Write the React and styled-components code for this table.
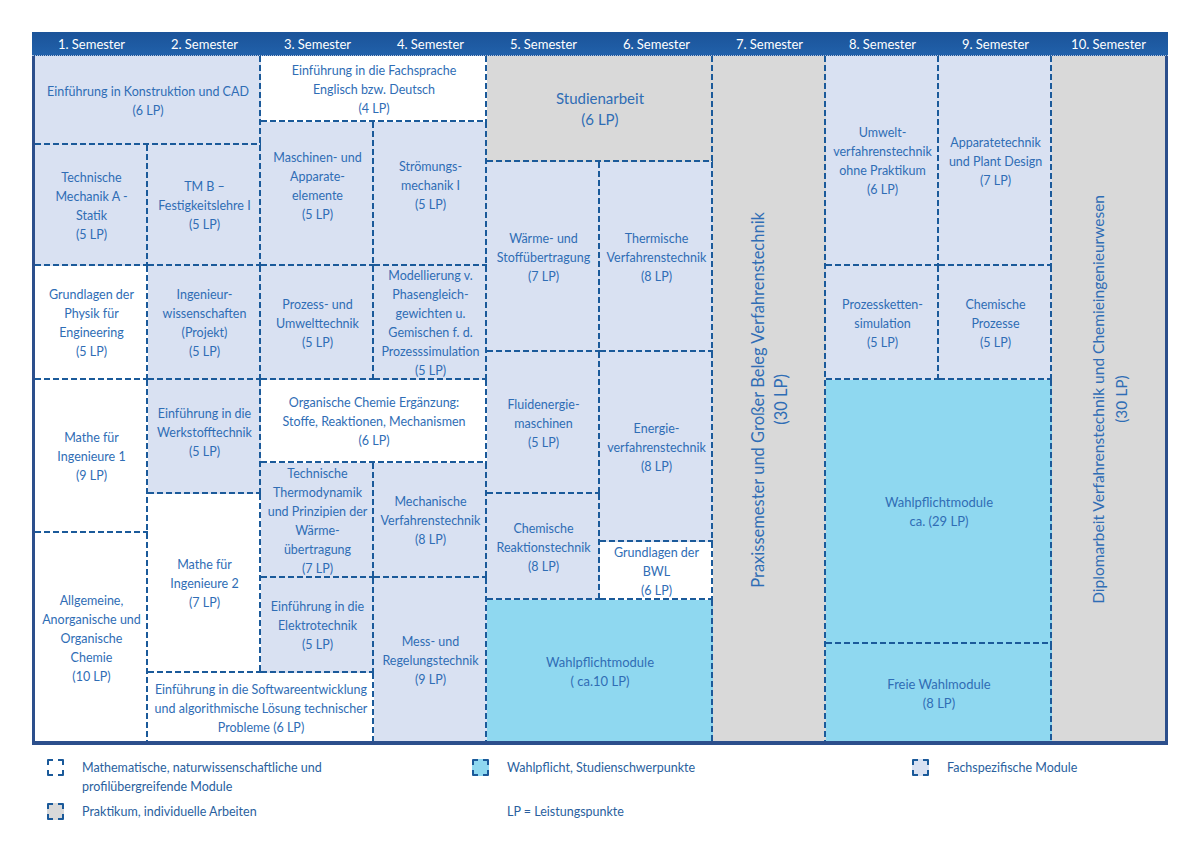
import React from 'react';
import styled, { createGlobalStyle } from 'styled-components';

const GlobalStyle = createGlobalStyle`
  body {
    margin: 0;
    background: #ffffff;
    font-family: Lato, "Noto Sans", sans-serif;
  }
`;

const fills = {
  blue: '#d9e1f2',
  white: '#ffffff',
  gray: '#d9d9d9',
  cyan: '#8fd8f0',
};

const DASH = '#1b5a9a';

const Page = styled.div`
  padding: 32px 0 0 32px;
`;

const Frame = styled.div`
  width: 1130px;
  border-left: 3px solid #2c4f8c;
  border-right: 3px solid #2c4f8c;
  border-bottom: 4px solid #2c4f8c;
`;

const Header = styled.div`
  display: grid;
  grid-template-columns: repeat(10, 113px);
  height: 23px;
  margin-left: -3px;
  margin-right: -3px;
  padding: 0 3px;
  background: linear-gradient(#1b5399, #2161aa);
  border-bottom: 1px dotted #a9c0e0;
`;

const HeadLabel = styled.div`
  display: flex;
  align-items: center;
  justify-content: center;
  color: #ffffff;
  font-size: 13px;
`;

const Body = styled.div`
  height: 685px;
  overflow: hidden;
`;

const Grid = styled.div`
  display: grid;
  grid-template-columns: repeat(9, 113px) 115px;
  grid-template-rows: 66px 23px 17px 104px 86px 28px 83px 31px 39px 9px 36px 22px 44px 29px 70px;
`;

const Cell = styled.div`
  grid-column: ${(p) => p.$c};
  grid-row: ${(p) => p.$r};
  display: flex;
  align-items: center;
  justify-content: center;
  text-align: center;
  padding: 0 2px ${(p) => p.$lift || 0}px;
  color: #2f6db5;
  font-size: ${(p) => p.$size || 12.5}px;
  line-height: ${(p) => p.$lh || 19}px;
  white-space: nowrap;
  background-color: ${(p) => fills[p.$kind]};
  background-image:
    repeating-linear-gradient(to bottom, ${DASH} 0 6px, transparent 6px 9px),
    repeating-linear-gradient(to right, ${DASH} 0 6px, transparent 6px 9px);
  background-size: 2px 100%, 100% 2px;
  background-position: right top, left bottom;
  background-repeat: no-repeat;
`;

const Vertical = styled.div`
  writing-mode: vertical-rl;
  transform: rotate(180deg);
  font-size: ${(p) => p.$size}px;
  line-height: 23px;
  text-align: center;
`;

const Legend = styled.div`
  display: grid;
  grid-template-columns: 425px 440px auto;
  row-gap: 6px;
  margin: 13px 0 0 15px;
  color: #2a5f9e;
  font-size: 12.5px;
  line-height: 19px;
`;

const LegendItem = styled.div`
  display: flex;
  align-items: flex-start;
  gap: 18px;
`;

const Swatch = styled.span`
  flex: none;
  width: 13px;
  height: 13px;
  margin-top: 1px;
  border: 2px dashed ${DASH};
  border-radius: 1px;
  background: ${(p) => (p.$kind ? fills[p.$kind] : 'transparent')};
  visibility: ${(p) => (p.$kind ? 'visible' : 'hidden')};
`;

const semesters = Array.from({ length: 10 }, (_, i) => `${i + 1}. Semester`);

const modules = [
  { c: '1/3', r: '1/3', k: 'blue', t: ['Einführung in Konstruktion und CAD', '(6 LP)'] },
  { c: '3/5', r: '1/2', k: 'white', t: ['Einführung in die Fachsprache', 'Englisch bzw. Deutsch', '(4 LP)'] },
  { c: '5/7', r: '1/4', k: 'gray', size: 15, lh: 21, t: ['Studienarbeit', '(6 LP)'] },
  { c: '7/8', r: '1/16', k: 'gray', vertical: 16.5, t: ['Praxissemester und Großer Beleg Verfahrenstechnik', '(30 LP)'] },
  { c: '8/9', r: '1/5', k: 'blue', t: ['Umwelt-', 'verfahrenstechnik', 'ohne Praktikum', '(6 LP)'] },
  { c: '9/10', r: '1/5', k: 'blue', t: ['Apparatetechnik', 'und Plant Design', '(7 LP)'] },
  { c: '10/11', r: '1/16', k: 'gray', vertical: 15.5, t: ['Diplomarbeit Verfahrenstechnik und Chemieingenieurwesen', '(30 LP)'] },
  { c: '1/2', r: '3/5', k: 'blue', t: ['Technische', 'Mechanik A -', 'Statik', '(5 LP)'] },
  { c: '2/3', r: '3/5', k: 'blue', t: ['TM B –', 'Festigkeitslehre I', '(5 LP)'] },
  { c: '3/4', r: '2/5', k: 'blue', lift: 16, t: ['Maschinen- und', 'Apparate-', 'elemente', '(5 LP)'] },
  { c: '4/5', r: '2/5', k: 'blue', lift: 18, t: ['Strömungs-', 'mechanik I', '(5 LP)'] },
  { c: '5/6', r: '4/6', k: 'blue', t: ['Wärme- und', 'Stoffübertragung', '(7 LP)'] },
  { c: '6/7', r: '4/6', k: 'blue', t: ['Thermische', 'Verfahrenstechnik', '(8 LP)'] },
  { c: '1/2', r: '5/7', k: 'white', t: ['Grundlagen der', 'Physik für', 'Engineering', '(5 LP)'] },
  { c: '2/3', r: '5/7', k: 'blue', t: ['Ingenieur-', 'wissenschaften', '(Projekt)', '(5 LP)'] },
  { c: '3/4', r: '5/7', k: 'blue', t: ['Prozess- und', 'Umwelttechnik', '(5 LP)'] },
  { c: '4/5', r: '5/7', k: 'blue', t: ['Modellierung v.', 'Phasengleich-', 'gewichten u.', 'Gemischen f. d.', 'Prozesssimulation', '(5 LP)'] },
  { c: '8/9', r: '5/7', k: 'blue', t: ['Prozessketten-', 'simulation', '(5 LP)'] },
  { c: '9/10', r: '5/7', k: 'blue', t: ['Chemische', 'Prozesse', '(5 LP)'] },
  { c: '5/6', r: '6/9', k: 'blue', t: ['Fluidenergie-', 'maschinen', '(5 LP)'] },
  { c: '6/7', r: '6/11', k: 'blue', t: ['Energie-', 'verfahrenstechnik', '(8 LP)'] },
  { c: '1/2', r: '7/10', k: 'white', t: ['Mathe für', 'Ingenieure 1', '(9 LP)'] },
  { c: '2/3', r: '7/9', k: 'blue', lift: 10, t: ['Einführung in die', 'Werkstofftechnik', '(5 LP)'] },
  { c: '3/5', r: '7/8', k: 'white', t: ['Organische Chemie Ergänzung:', 'Stoffe, Reaktionen, Mechanismen', '(6 LP)'] },
  { c: '8/10', r: '7/14', k: 'cyan', size: 13, t: ['Wahlpflichtmodule', 'ca. (29 LP)'] },
  { c: '3/4', r: '8/12', k: 'blue', t: ['Technische', 'Thermodynamik', 'und Prinzipien der', 'Wärme-', 'übertragung', '(7 LP)'] },
  { c: '4/5', r: '8/12', k: 'blue', t: ['Mechanische', 'Verfahrenstechnik', '(8 LP)'] },
  { c: '2/3', r: '9/15', k: 'white', t: ['Mathe für', 'Ingenieure 2', '(7 LP)'] },
  { c: '5/6', r: '9/13', k: 'blue', t: ['Chemische', 'Reaktionstechnik', '(8 LP)'] },
  { c: '1/2', r: '10/16', k: 'white', t: ['Allgemeine,', 'Anorganische und', 'Organische', 'Chemie', '(10 LP)'] },
  { c: '6/7', r: '11/13', k: 'white', t: ['Grundlagen der', 'BWL', '(6 LP)'] },
  { c: '3/4', r: '12/15', k: 'blue', t: ['Einführung in die', 'Elektrotechnik', '(5 LP)'] },
  { c: '4/5', r: '12/16', k: 'blue', t: ['Mess- und', 'Regelungstechnik', '(9 LP)'] },
  { c: '5/7', r: '13/16', k: 'cyan', size: 13, t: ['Wahlpflichtmodule', '( ca.10 LP)'] },
  { c: '8/10', r: '14/16', k: 'cyan', size: 13, t: ['Freie Wahlmodule', '(8 LP)'] },
  { c: '2/4', r: '15/16', k: 'white', t: ['Einführung in die Softwareentwicklung', 'und algorithmische Lösung technischer', 'Probleme (6 LP)'] },
];

const Lines = ({ lines }) => (
  <div>
    {lines.map((l, i) => (
      <React.Fragment key={i}>
        {i > 0 && <br />}
        {l}
      </React.Fragment>
    ))}
  </div>
);

export default function App() {
  return (
    <Page>
      <GlobalStyle />
      <Frame>
        <Header>
          {semesters.map((s) => (
            <HeadLabel key={s}>{s}</HeadLabel>
          ))}
        </Header>
        <Body>
          <Grid>
            {modules.map((m, i) => (
              <Cell key={i} $c={m.c} $r={m.r} $kind={m.k} $size={m.size} $lh={m.lh} $lift={m.lift}>
                {m.vertical ? (
                  <Vertical $size={m.vertical}>
                    {m.t[0]}
                    <br />
                    {m.t[1]}
                  </Vertical>
                ) : (
                  <Lines lines={m.t} />
                )}
              </Cell>
            ))}
          </Grid>
        </Body>
      </Frame>
      <Legend>
        <LegendItem>
          <Swatch $kind="white" />
          <span>
            Mathematische, naturwissenschaftliche und
            <br />
            profilübergreifende Module
          </span>
        </LegendItem>
        <LegendItem>
          <Swatch $kind="cyan" />
          <span>Wahlpflicht, Studienschwerpunkte</span>
        </LegendItem>
        <LegendItem>
          <Swatch $kind="blue" />
          <span>Fachspezifische Module</span>
        </LegendItem>
        <LegendItem>
          <Swatch $kind="gray" />
          <span>Praktikum, individuelle Arbeiten</span>
        </LegendItem>
        <LegendItem>
          <Swatch />
          <span>LP = Leistungspunkte</span>
        </LegendItem>
      </Legend>
    </Page>
  );
}
